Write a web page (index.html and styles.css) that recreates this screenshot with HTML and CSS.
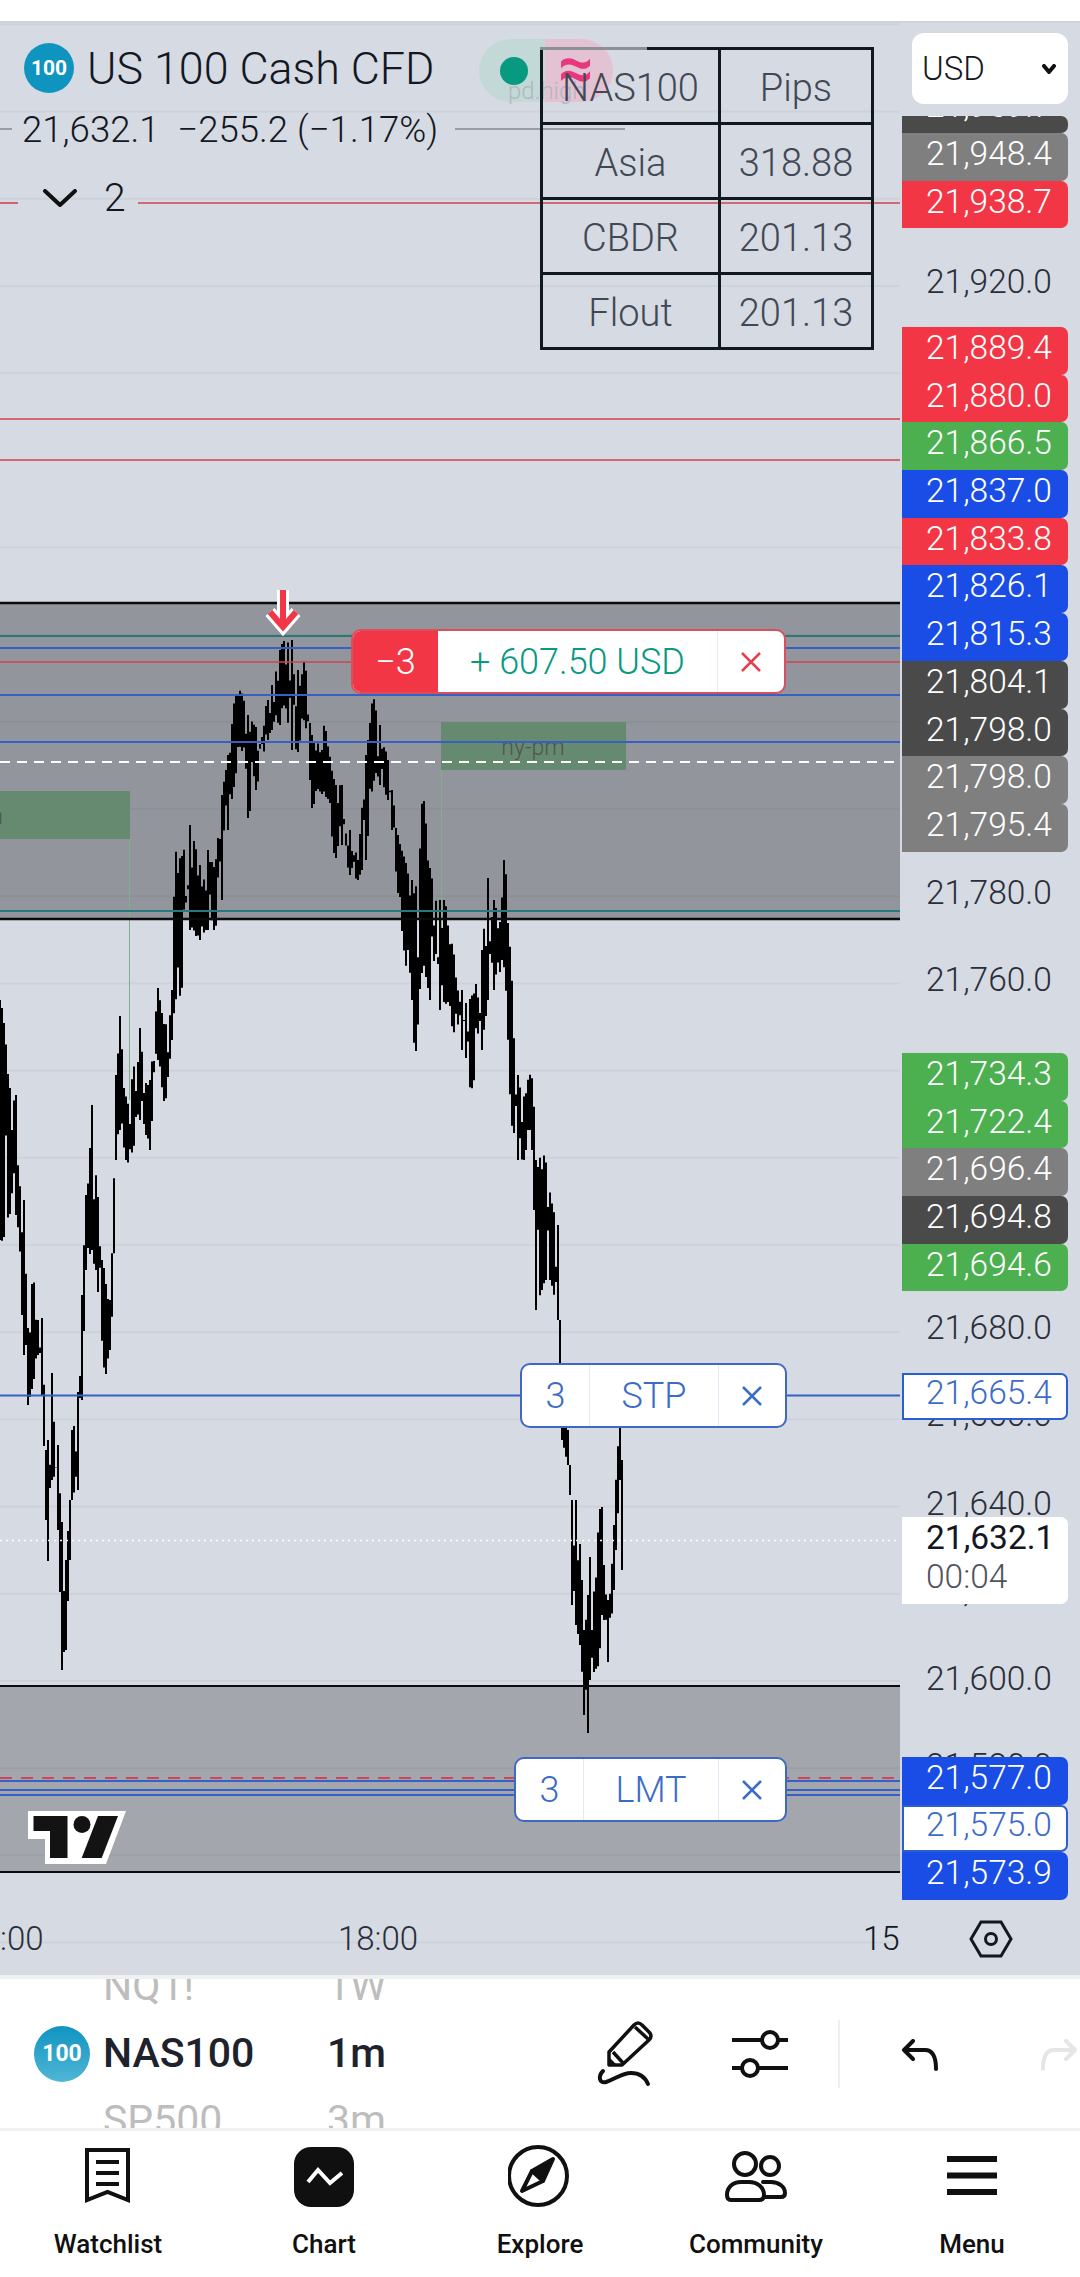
FILE: index.html
```html
<!DOCTYPE html>
<html lang="en">

<head>
    <meta charset="UTF-8">
    <meta name="viewport" content="width=device-width, initial-scale=1.0">
    <title>US 100 Cash CFD - Chart</title>
    <link rel="stylesheet" href="styles.css">
</head>

<body>
    <div class="app">
        <div class="statusbar"></div>

        <main class="chart">
            <section class="plot">
                <!-- price canvas, coordinates are page pixels -->
                <svg class="canvas" viewBox="0 23 900 1954" width="900" height="1954">
                    <rect class="zone zone-top" x="0" y="603" width="900" height="316"></rect>
                    <rect class="zone zone-bottom" x="0" y="1686" width="900" height="186"></rect>
                    <rect class="session" x="441" y="722" width="185" height="48"></rect>
                    <rect class="session" x="0" y="791" width="130" height="48"></rect>
                    <line class="session-line" x1="441.5" y1="770" x2="441.5" y2="950"></line>
                    <line class="session-line" x1="129.5" y1="839" x2="129.5" y2="1100"></line>
                    <text class="session-label" x="533" y="755">ny-pm</text>
                    <text class="session-label session-label-cut" x="3" y="824">ny-am</text>
                    <g id="candles"></g>
                    <line class="edge" x1="0" y1="603" x2="900" y2="603"></line>
                    <line class="edge" x1="0" y1="919" x2="900" y2="919"></line>
                    <line class="edge thin" x1="0" y1="1686" x2="900" y2="1686"></line>
                    <line class="edge thin" x1="0" y1="1872" x2="900" y2="1872"></line>
                    <line class="grey-line" x1="0" y1="129" x2="12" y2="129"></line>
                    <line class="grey-line" x1="455" y1="129" x2="625" y2="129"></line>
                    <line class="red-line" x1="0" y1="203" x2="18" y2="203"></line>
                    <line class="red-line" x1="138" y1="203" x2="900" y2="203"></line>
                    <line class="red-line" x1="0" y1="419" x2="900" y2="419"></line>
                    <line class="red-line" x1="0" y1="460" x2="900" y2="460"></line>
                    <line class="teal-line" x1="0" y1="636" x2="900" y2="636"></line>
                    <line class="blue-line" x1="0" y1="648" x2="900" y2="648"></line>
                    <line class="red-line" x1="0" y1="662" x2="900" y2="662"></line>
                    <line class="blue-line" x1="0" y1="695" x2="900" y2="695"></line>
                    <line class="blue-line" x1="0" y1="742" x2="900" y2="742"></line>
                    <line class="white-dash" x1="0" y1="762" x2="900" y2="762"></line>
                    <line class="teal-line" x1="0" y1="911" x2="900" y2="911"></line>
                    <line class="blue-line" x1="0" y1="1395.5" x2="900" y2="1395.5"></line>
                    <line class="white-dot" x1="0" y1="1540.5" x2="900" y2="1540.5"></line>
                    <line class="red-dash" x1="0" y1="1778" x2="900" y2="1778"></line>
                    <line class="blue-line" x1="0" y1="1781" x2="900" y2="1781"></line>
                    <line class="blue-line" x1="0" y1="1790" x2="900" y2="1790"></line>
                    <line class="blue-line" x1="0" y1="1795" x2="900" y2="1795"></line>
                    <path class="sell-arrow-back" d="M283 590V625M270 612L283 627L296 612"></path>
                    <path class="sell-arrow" d="M283 590V625M270 612L283 627L296 612"></path>
                    <!-- tv logo -->
                    <path class="tv-back" d="M28 1811H126L106 1864H45V1839H28Z"></path>
                    <path class="tv-mark" d="M33.500 1816H67.500V1858H50V1831H33.500Z"></path>
                    <circle class="tv-mark" cx="82" cy="1824.500" r="8.500"></circle>
                    <path class="tv-mark" d="M98 1816H118L101.700 1858H81.700Z"></path>
                </svg>

                <div class="legend">
                    <div class="legend-title">
                        <span class="logo">100</span>
                        <span>US 100 Cash CFD</span>
                    </div>
                    <div class="legend-price">21,632.1&nbsp; −255.2 (−1.17%)</div>
                    <div class="legend-more">
                        <svg width="34" height="18" viewBox="0 0 34 18"><path class="stroke" d="M2 2L17 16L32 2"></path></svg>
                        <span>2</span>
                    </div>
                </div>

                <div class="status-pill">
                    <span class="pill-left"><i class="dot"></i></span>
                    <span class="pill-right">≈</span>
                    <span class="pill-note">pd.high</span>
                </div>

                <div class="pips">
                    <table class="pips-table">
                        <tr><td>NAS100</td><td>Pips</td></tr>
                        <tr><td>Asia</td><td>318.88</td></tr>
                        <tr><td>CBDR</td><td>201.13</td></tr>
                        <tr><td>Flout</td><td>201.13</td></tr>
                    </table>
                </div>

                <div class="order order-profit">
                    <span class="order-qty">−3</span>
                    <span class="order-label">+ 607.50 USD</span>
                    <span class="order-close"><svg width="22" height="22" viewBox="0 0 22 22"><path class="stroke-thin" d="M2 2L20 20M20 2L2 20"></path></svg></span>
                </div>
                <div class="order order-stop">
                    <span class="order-qty">3</span>
                    <span class="order-label">STP</span>
                    <span class="order-close"><svg width="22" height="22" viewBox="0 0 22 22"><path class="stroke-thin" d="M2 2L20 20M20 2L2 20"></path></svg></span>
                </div>
                <div class="order order-limit">
                    <span class="order-qty">3</span>
                    <span class="order-label">LMT</span>
                    <span class="order-close"><svg width="22" height="22" viewBox="0 0 22 22"><path class="stroke-thin" d="M2 2L20 20M20 2L2 20"></path></svg></span>
                </div>

                <span class="time time-a">:00</span>
                <span class="time time-b">18:00</span>
                <span class="time time-c">15</span>
            </section>

            <aside class="axis">
                <span class="axis-label" style="top:235px">21,920.0</span>
                <span class="axis-label" style="top:846px">21,780.0</span>
                <span class="axis-label" style="top:933px">21,760.0</span>
                <span class="axis-label" style="top:1281px">21,680.0</span>
                <span class="axis-label" style="top:1368px">21,660.0</span>
                <span class="axis-label" style="top:1457px">21,640.0</span>
                <span class="axis-label" style="top:1544px">21,620.0</span>
                <span class="axis-label" style="top:1632px">21,600.0</span>
                <span class="axis-label" style="top:1719px">21,580.0</span>

                <div class="currency">USD
                    <svg width="14" height="10" viewBox="0 0 14 10"><path class="stroke" d="M2 2L7 8L12 2"></path></svg>
                </div>

                <div class="stack" style="top:93px">
                    <div class="tag tag-dark tag-cut"><span>21,959.7</span></div>
                    <div class="tag tag-grey">21,948.4</div>
                    <div class="tag tag-red">21,938.7</div>
                </div>
                <div class="stack" style="top:304px">
                    <div class="tag tag-red">21,889.4</div>
                    <div class="tag tag-red">21,880.0</div>
                    <div class="tag tag-green">21,866.5</div>
                    <div class="tag tag-blue">21,837.0</div>
                    <div class="tag tag-red">21,833.8</div>
                    <div class="tag tag-blue">21,826.1</div>
                    <div class="tag tag-blue">21,815.3</div>
                    <div class="tag tag-dark">21,804.1</div>
                    <div class="tag tag-dark">21,798.0</div>
                    <div class="tag tag-grey">21,798.0</div>
                    <div class="tag tag-grey">21,795.4</div>
                </div>
                <div class="stack" style="top:1030px">
                    <div class="tag tag-green">21,734.3</div>
                    <div class="tag tag-green">21,722.4</div>
                    <div class="tag tag-grey">21,696.4</div>
                    <div class="tag tag-dark">21,694.8</div>
                    <div class="tag tag-green">21,694.6</div>
                </div>
                <div class="stack" style="top:1349.500px">
                    <div class="tag tag-outline">21,665.4</div>
                </div>
                <div class="last-price">
                    <span>21,632.1</span>
                    <span class="countdown">00:04</span>
                </div>
                <div class="stack" style="top:1734px">
                    <div class="tag tag-blue">21,577.0</div>
                    <div class="tag tag-outline">21,575.0</div>
                    <div class="tag tag-blue">21,573.9</div>
                </div>

                <svg class="hex" width="44" height="38" viewBox="0 0 44 38">
                    <path class="stroke-hex" d="M12 2H32L42 19L32 36H12L2 19Z"></path>
                    <circle class="stroke-hex" cx="22" cy="19" r="5.500"></circle>
                </svg>
            </aside>
        </main>

        <section class="toolbar">
            <span class="logo logo-big">100</span>
            <div class="picker picker-symbol">
                <span class="faded">NQ1!</span>
                <span>NAS100</span>
                <span class="faded">SP500</span>
            </div>
            <div class="picker picker-interval">
                <span class="faded">1W</span>
                <span>1m</span>
                <span class="faded">3m</span>
            </div>
            <div class="tools">
                <svg class="tool-pencil" width="60" height="70" viewBox="0 0 60 70">
                    <path class="stroke-slim" d="M14 33L39 6Q43 2 47 6L54 13Q58 17 54 21L27 46H14Z"></path>
                    <path class="stroke-slim" d="M40 8L53 20M18 33L28 44"></path>
                    <path class="fill" d="M14 38L13 47H23Z"></path>
                    <path class="stroke" d="M8 52C3 57 4 65 11 63C20 60 27 54 36 54C44 54 50 58 53 65"></path>
                </svg>
                <svg class="tool-sliders" width="56" height="52" viewBox="0 0 56 52">
                    <path class="stroke-square" d="M0 12H56M0 40H56"></path>
                    <circle class="knob" cx="38" cy="12" r="8"></circle>
                    <circle class="knob" cx="18" cy="40" r="8"></circle>
                </svg>
                <span class="tool-divider"></span>
                <svg class="tool-undo" width="38" height="32" viewBox="0 0 38 32">
                    <path class="stroke" d="M12 2L3 11L12 20M3 11H24C31 11 35 17 35 30"></path>
                </svg>
                <svg class="tool-redo" width="38" height="32" viewBox="0 0 38 32">
                    <path class="stroke" d="M26 2L35 11L26 20M35 11H14C7 11 3 17 3 30"></path>
                </svg>
            </div>
        </section>

        <nav class="tabbar">
            <a class="tab">
                <svg width="56" height="66" viewBox="0 0 56 66">
                    <path class="stroke-square" d="M7 6H48V56L27.500 48L7 56Z"></path>
                    <path class="stroke-square" d="M16 18H39M16 29H39M16 40H39"></path>
                </svg>
                <span>Watchlist</span>
            </a>
            <a class="tab">
                <svg width="60" height="66" viewBox="0 0 60 66">
                    <rect class="fill" x="0" y="3" width="60" height="60" rx="17"></rect>
                    <path class="stroke-white" d="M14 38L24 26L36 39L48 29"></path>
                </svg>
                <span>Chart</span>
            </a>
            <a class="tab">
                <svg width="64" height="66" viewBox="0 0 64 66">
                    <circle class="stroke" cx="30" cy="32" r="29"></circle>
                    <path class="fill stroke" d="M45 15L24 27L35 37Z"></path>
                    <path class="stroke" d="M24 27L14 47L35 37"></path>
                </svg>
                <span>Explore</span>
            </a>
            <a class="tab">
                <svg width="70" height="66" viewBox="0 0 70 66">
                    <circle class="stroke" cx="24" cy="20" r="11"></circle>
                    <circle class="stroke" cx="49" cy="22" r="9"></circle>
                    <path class="stroke" d="M10 56H38Q43 56 43 51C43 43 36 38 28 38H20C12 38 6 43 6 51Q6 56 10 56Z"></path>
                    <path class="stroke" d="M42 38H50C58 38 64 43 64 49Q64 53 60 53H43"></path>
                </svg>
                <span>Community</span>
            </a>
            <a class="tab">
                <svg width="50" height="66" viewBox="0 0 50 66">
                    <path class="stroke-bars" d="M0 15H50M0 31.500H50M0 48H50"></path>
                </svg>
                <span>Menu</span>
            </a>
        </nav>
    </div>

    <script src="chart.js"></script>
</body>

</html>
```

FILE: styles.css
```css
* {
    box-sizing: border-box;
}

body {
    margin: 0;
    font-family: Roboto, 'Liberation Sans', sans-serif;
    background-color: #fff;
    color: #131722;
    overflow: hidden;
}

.app {
    width: 1080px;
    height: 2277px;
    display: flex;
    flex-direction: column;
    overflow: hidden;
}

.statusbar {
    height: 23px;
    flex: none;
    background-color: #fff;
}

/* chart area */
.chart {
    flex: none;
    display: flex;
    background-color: #d6dae3;
    border-top: 2px solid #cfd2d8;
    margin-top: -2px;
    border-bottom: 4px solid #eef0f2;
    box-sizing: content-box;
    height: 1952px;
    font-weight: 300;
}

.plot {
    position: relative;
    width: 900px;
    flex: none;
    background-image: linear-gradient(to bottom, #cdd1da 2px, transparent 2px);
    background-size: 100% 87.2px;
    background-position: 0 0.4px;
}

.canvas {
    position: absolute;
    top: 0;
    left: 0;
}

.zone-top {
    fill: rgba(0, 0, 0, 0.315);
}

.zone-bottom {
    fill: rgba(0, 0, 0, 0.235);
}

.session {
    fill: #668a70;
}

.session-line {
    stroke: #7fb08d;
    stroke-width: 1;
}

.session-label {
    font-size: 23px;
    fill: #4f5650;
    text-anchor: middle;
}

.session-label-cut {
    text-anchor: end;
}

.edge {
    stroke: #0b0b0b;
    stroke-width: 2.5;
}

.edge.thin {
    stroke-width: 2;
}

.grey-line {
    stroke: #9a9da5;
    stroke-width: 2;
}

.red-line {
    stroke: #cf4450;
    stroke-width: 1.6;
}

.teal-line {
    stroke: #28797e;
    stroke-width: 2;
}

.blue-line {
    stroke: #3560c4;
    stroke-width: 2;
}

.white-dash {
    stroke: #fff;
    stroke-width: 2;
    stroke-dasharray: 10 7;
}

.white-dot {
    stroke: #fff;
    stroke-width: 1.5;
    stroke-dasharray: 2 4;
}

.red-dash {
    stroke: #d0455a;
    stroke-width: 2;
    stroke-dasharray: 12 9;
}

.sell-arrow-back {
    fill: none;
    stroke: #fff;
    stroke-width: 12;
}

.sell-arrow {
    fill: none;
    stroke: #f23645;
    stroke-width: 6;
}

.tv-back {
    fill: #fff;
}

.tv-mark {
    fill: #131313;
}

.candle-path {
    stroke: #000;
    stroke-width: 2;
    fill: none;
}

/* legend */
.legend {
    position: absolute;
    top: 20px;
    left: 24px;
}

.logo {
    width: 50px;
    height: 50px;
    flex: none;
    display: flex;
    align-items: center;
    justify-content: center;
    border-radius: 50%;
    background-color: #0f94c0;
    color: #fff;
    font-size: 21px;
    font-weight: 700;
}

.legend-title {
    display: flex;
    align-items: center;
    gap: 13px;
    height: 50px;
    font-size: 44.8px;
}

.legend-price {
    height: 46px;
    line-height: 46px;
    margin-top: 14px;
    margin-left: -2px;
    font-size: 36.6px;
}

.legend-more {
    display: flex;
    align-items: center;
    gap: 27px;
    height: 46px;
    margin-top: 22px;
    margin-left: 19px;
    font-size: 39px;
}

.stroke {
    fill: none;
    stroke: #101010;
    stroke-width: 4;
    stroke-linejoin: round;
    stroke-linecap: round;
}

.stroke-slim {
    fill: none;
    stroke: #101010;
    stroke-width: 3.5;
    stroke-linejoin: round;
}

.stroke-thin {
    fill: none;
    stroke: currentColor;
    stroke-width: 2.5;
}

.stroke-square {
    fill: none;
    stroke: #101010;
    stroke-width: 4;
}

.stroke-bars {
    fill: none;
    stroke: #101010;
    stroke-width: 6;
}

.stroke-white {
    fill: none;
    stroke: #fff;
    stroke-width: 4;
}

.stroke-hex {
    fill: none;
    stroke: #131722;
    stroke-width: 3;
}

.fill {
    fill: #101010;
}

.knob {
    fill: #fff;
    stroke: #101010;
    stroke-width: 4;
}

/* market status */
.status-pill {
    position: absolute;
    top: 16px;
    left: 479px;
    width: 134px;
    height: 63px;
    display: flex;
}

.pill-left {
    width: 66px;
    background-color: #c3d9d8;
    border-radius: 32px 0 0 32px;
    display: flex;
    align-items: center;
    padding-left: 21px;
}

.dot {
    width: 28px;
    height: 28px;
    border-radius: 50%;
    background-color: #089981;
}

.pill-right {
    flex: 1;
    background-color: #e3c3d3;
    border-radius: 0 32px 32px 0;
    color: #e8387d;
    font-size: 62px;
    font-weight: 700;
    line-height: 58px;
    padding-left: 13px;
}

.pill-note {
    position: absolute;
    top: 38px;
    left: 29px;
    font-size: 24px;
    color: #b3b6c0;
}

/* pips table */
.pips {
    position: absolute;
    top: 24px;
    left: 540px;
}

.pips::before {
    content: "";
    position: absolute;
    top: 0;
    left: 0;
    width: 107px;
    height: 3px;
    background-color: #8c8f96;
}

.pips-table {
    width: 334px;
    height: 303px;
    border-collapse: collapse;
    table-layout: fixed;
    border: 3px solid #101820;
    font-size: 38px;
    color: #414854;
    text-align: center;
}

.pips-table td {
    border: 3px solid #101820;
    padding: 4px 0 0;
}

.pips-table td:first-child {
    width: 178px;
}

/* order labels */
.order {
    position: absolute;
    display: flex;
    height: 65px;
    background-color: #fff;
    border: 2px solid #3f68c4;
    border-radius: 10px;
    overflow: hidden;
    font-size: 36px;
    color: #3d6bc8;
    align-items: stretch;
    text-align: center;
    line-height: 62px;
}

.order-qty {
    width: 67px;
    flex: none;
}

.order-label {
    flex: 1;
    border-left: 1px solid #e3e8f2;
}

.order-close {
    width: 67px;
    flex: none;
    display: flex;
    align-items: center;
    justify-content: center;
    border-left: 1px solid #e3e8f2;
}

.order-profit {
    top: 606px;
    left: 351px;
    width: 435px;
    border-color: #d9505c;
    color: #089981;
}

.order-profit .order-qty {
    width: 85px;
    background-color: #f23645;
    color: #fff;
}

.order-profit .order-label {
    border-left: none;
}

.order-profit .order-close {
    color: #e0434f;
    border-left-color: #f6e6e7;
}

.order-stop {
    top: 1340px;
    left: 520px;
    width: 267px;
}

.order-limit {
    top: 1734px;
    left: 514px;
    width: 273px;
}

/* time scale */
.time {
    position: absolute;
    top: 1892px;
    font-size: 33px;
    line-height: 48px;
    color: #2a2e39;
}

.time-a {
    left: 0;
}

.time-b {
    left: 338px;
}

.time-c {
    left: 863px;
    color: #131722;
}

/* price axis */
.axis {
    position: relative;
    width: 180px;
    flex: none;
    font-size: 33.5px;
}

.axis-label {
    position: absolute;
    left: 26px;
    height: 48px;
    line-height: 48px;
    color: #2a2e39;
}

.currency {
    position: absolute;
    top: 10px;
    left: 12px;
    width: 156px;
    height: 71px;
    display: flex;
    align-items: center;
    justify-content: space-between;
    padding: 0 12px 0 10px;
    background-color: #fff;
    border-radius: 12px;
    font-size: 33px;
}

.stack {
    position: absolute;
    left: 2px;
    width: 166px;
    display: flex;
    flex-direction: column;
}

.tag {
    height: 47.7px;
    line-height: 41px;
    padding-left: 24px;
    border-radius: 0 7px 7px 0;
    color: #fff;
    overflow: hidden;
}

.tag-cut {
    height: 17px;
}

.tag-cut span {
    display: block;
    margin-top: -31px;
}

.tag-red {
    background-color: #f23645;
}

.tag-green {
    background-color: #4caf50;
}

.tag-blue {
    background-color: #1a4de6;
}

.tag-dark {
    background-color: #4a4a4a;
}

.tag-grey {
    background-color: #7f7f7f;
}

.tag-outline {
    background-color: #fff;
    border: 2px solid #2a5fd0;
    color: #3d6bc8;
    padding-left: 22px;
    line-height: 36px;
}

.last-price {
    position: absolute;
    top: 1494px;
    left: 2px;
    width: 166px;
    height: 87px;
    padding: 1px 0 0 24px;
    display: flex;
    flex-direction: column;
    background-color: #fff;
    border-radius: 0 7px 7px 0;
    line-height: 39px;
    font-weight: 400;
    color: #131722;
}

.countdown {
    color: #50535e;
    font-weight: 300;
}

.hex {
    position: absolute;
    top: 1897px;
    left: 69px;
}

/* symbol toolbar */
.toolbar {
    height: 152px;
    flex: none;
    display: flex;
    align-items: center;
    padding-left: 34px;
    background-color: #fff;
    border-bottom: 3px solid #eef0f2;
}

.logo-big {
    width: 56px;
    height: 56px;
    background-image: linear-gradient(#0f94c0, #4fb6d6);
    font-size: 23px;
    margin-right: 13px;
}

.picker {
    height: 149px;
    overflow: hidden;
    display: flex;
    flex-direction: column;
    justify-content: center;
    font-size: 41px;
    font-weight: 500;
    line-height: 67px;
    color: #1e222d;
    flex: none;
}

.picker span {
    height: 67px;
    flex: none;
}

.picker-symbol {
    width: 224px;
}

.picker-interval {
    width: 268px;
}

.faded {
    color: #bdbdbd;
    font-weight: 400;
}

.tools {
    display: flex;
    align-items: center;
    height: 100%;
}

.tool-sliders {
    margin-left: 77px;
}

.tool-divider {
    width: 2px;
    height: 68px;
    margin-left: 50px;
    background-color: #efefef;
}

.tool-undo {
    margin-left: 61px;
    margin-top: 2px;
}

.tool-redo {
    margin-left: 101px;
    margin-top: 2px;
    flex: none;
}

.tool-redo .stroke {
    stroke: #e6e6e6;
}

/* bottom tabs */
.tabbar {
    flex: 1;
    display: flex;
    background-color: #fff;
}

.tab {
    width: 216px;
    padding-top: 13px;
    display: flex;
    flex-direction: column;
    align-items: center;
    color: #101010;
    font-size: 26px;
    font-weight: 500;
}

.tab span {
    margin-top: 16px;
    line-height: 36px;
}
```

FILE: chart.js
```js
// high / low envelope of the price, traced from the session: [x, top, bottom]
var points = [
    [0, 1000, 1240], [3, 1012, 1241], [10, 1088, 1214], [16, 1095, 1215], [24, 1200, 1355],
    [28, 1328, 1405], [33, 1273, 1385], [38, 1320, 1355], [42, 1318, 1395], [46, 1450, 1520],
    [48, 1440, 1561], [52, 1373, 1480], [58, 1445, 1530], [62, 1522, 1670], [66, 1560, 1650],
    [70, 1500, 1560], [72, 1430, 1500], [78, 1392, 1490], [82, 1295, 1400], [86, 1195, 1270],
    [92, 1105, 1250], [98, 1197, 1292], [105, 1280, 1380], [110, 1300, 1350], [113, 1230, 1300],
    [116, 1075, 1160], [120, 1016, 1130], [127, 1110, 1165], [133, 1073, 1150], [140, 1028, 1120],
    [150, 1080, 1150], [158, 988, 1060], [165, 1030, 1108], [172, 990, 1040], [175, 850, 1000],
    [181, 860, 995], [190, 825, 930], [200, 865, 940], [208, 850, 930], [215, 870, 930],
    [222, 795, 900], [228, 755, 830], [235, 695, 780], [241, 690, 740], [248, 715, 818],
    [256, 727, 790], [268, 700, 740], [280, 650, 725], [283, 641, 700], [292, 640, 750],
    [298, 670, 752], [305, 660, 715], [312, 735, 808], [325, 725, 790], [335, 785, 860],
    [342, 785, 845], [350, 830, 875], [358, 860, 880], [366, 755, 860], [373, 695, 780],
    [380, 725, 785], [388, 760, 800], [392, 790, 830], [398, 835, 893], [405, 860, 960],
    [412, 880, 1000], [415, 900, 1064], [423, 790, 960], [430, 868, 1000], [440, 900, 1010],
    [445, 900, 1000], [453, 950, 1030], [462, 990, 1050], [471, 1000, 1092], [482, 950, 1050],
    [488, 878, 1000], [494, 900, 990], [505, 856, 965], [511, 965, 1120], [518, 1075, 1160],
    [525, 1100, 1160], [529, 1073, 1120], [533, 1080, 1160], [536, 1160, 1310], [545, 1155, 1280],
    [551, 1200, 1280], [558, 1225, 1320], [560, 1320, 1365], [562, 1365, 1440], [568, 1430, 1465],
    [570, 1465, 1495], [572, 1500, 1605], [576, 1500, 1625], [581, 1555, 1650], [584, 1630, 1715],
    [588, 1595, 1733], [590, 1557, 1680], [595, 1600, 1670], [599, 1510, 1665], [602, 1507, 1615],
    [604, 1565, 1620], [608, 1600, 1662], [614, 1525, 1590], [617, 1457, 1530], [620, 1425, 1480],
    [622, 1460, 1570]
];

// small fixed generator so the picture is the same on every load
var seed = 7;
function rnd() {
    seed = (seed * 16807) % 2147483647;
    return seed / 2147483647;
}

function drawCandles() {
    var d = '';
    var i = 0;
    for (var x = 0; x <= 622; x += 2) {
        while (i < points.length - 2 && points[i + 1][0] <= x) {
            i++;
        }
        var a = points[i];
        var b = points[i + 1];
        var t = (x - a[0]) / (b[0] - a[0]);
        var top = a[1] + (b[1] - a[1]) * t;
        var bot = a[2] + (b[2] - a[2]) * t;
        var span = bot - top;
        var y1 = top;
        var y2 = bot;
        // bars next to a traced point keep their full range, the rest are trimmed
        if (Math.abs(x - a[0]) > 1 && Math.abs(x - b[0]) > 1) {
            var r1 = rnd();
            var r2 = rnd();
            y1 = top + r1 * r1 * span * 0.6;
            y2 = bot - r2 * r2 * span * 0.6;
        }
        d += 'M' + x + ' ' + y1.toFixed(1) + 'V' + y2.toFixed(1);
    }
    var path = document.createElementNS('http://www.w3.org/2000/svg', 'path');
    path.setAttribute('class', 'candle-path');
    path.setAttribute('d', d);
    document.getElementById('candles').appendChild(path);
}

drawCandles();
```
